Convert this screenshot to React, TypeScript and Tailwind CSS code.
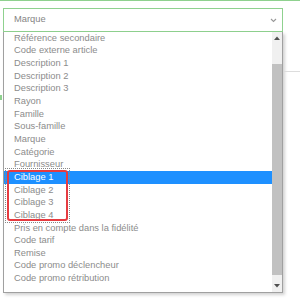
const options = [
  "Référence secondaire",
  "Code externe article",
  "Description 1",
  "Description 2",
  "Description 3",
  "Rayon",
  "Famille",
  "Sous-famille",
  "Marque",
  "Catégorie",
  "Fournisseur",
  "Ciblage 1",
  "Ciblage 2",
  "Ciblage 3",
  "Ciblage 4",
  "Pris en compte dans la fidélité",
  "Code tarif",
  "Remise",
  "Code promo déclencheur",
  "Code promo rétribution",
];

export default function App() {
  const selected = "Ciblage 1";

  return (
    <div className="relative w-[300px] h-[298px] overflow-hidden bg-white font-['Liberation_Sans',Arial,sans-serif]">
      {/* page content behind the dropdown */}
      <div className="h-px bg-[#8fd18f]" />
      <div className="absolute left-[284px] top-[71px] w-[16px] h-px bg-[#dddddd]" />
      <div className="absolute left-0 top-[95px] w-[2px] h-[5px] bg-[#8fd18f]" />

      <div className="pl-[3px] pt-[7px] w-[283px]">
        {/* select */}
        <div className="h-[24px] border border-[#8fd18f] flex items-center justify-between pl-[10px] pr-[5px] text-[9.33px] text-[#858585]">
          <span>Marque</span>
          <svg width="7" height="5" viewBox="0 0 7 5" className="mt-[1px]">
            <path d="M1 1 L3.5 3.5 L6 1" fill="none" stroke="#999999" strokeWidth="1.1" />
          </svg>
        </div>

        {/* open list */}
        <div className="h-[261px] border border-t-0 border-[#a0a0a0] flex shadow-[2px_2px_3px_rgba(0,0,0,0.18)] bg-white">
          <ul className="flex-1 flex flex-col">
            {options.map((o) => (
              <li
                key={o}
                className={`h-[12.67px] flex items-center pl-[10px] text-[9.33px] leading-none whitespace-nowrap ${
                  o === selected ? "bg-[#1e90ff] text-white" : "text-[#8c8c8c]"
                }`}
              >
                {o}
              </li>
            ))}
          </ul>

          {/* scrollbar */}
          <div className="w-[10px] flex flex-col bg-[#f0f0f0]">
            <div className="h-[12px] flex items-center justify-center">
              <svg width="6" height="4" viewBox="0 0 6 4">
                <path d="M0 4 L3 0.5 L6 4 Z" fill="#505050" />
              </svg>
            </div>
            <div className="flex-1 flex flex-col pt-[20px] pb-[5px]">
              <div className="flex-1 bg-[#c1c1c1]" />
            </div>
            <div className="h-[12px] flex items-center justify-center">
              <svg width="6" height="4" viewBox="0 0 6 4">
                <path d="M0 0 L3 3.5 L6 0 Z" fill="#505050" />
              </svg>
            </div>
          </div>
        </div>
      </div>

      {/* focus outline + annotation */}
      <div className="absolute left-[5px] top-[168px] w-[65px] h-[55px] border border-dotted border-[#888888]" />
      <div className="absolute left-[7px] top-[170px] w-[61px] h-[51px] border-2 border-[#e63b40] rounded-[3px]" />
    </div>
  );
}
